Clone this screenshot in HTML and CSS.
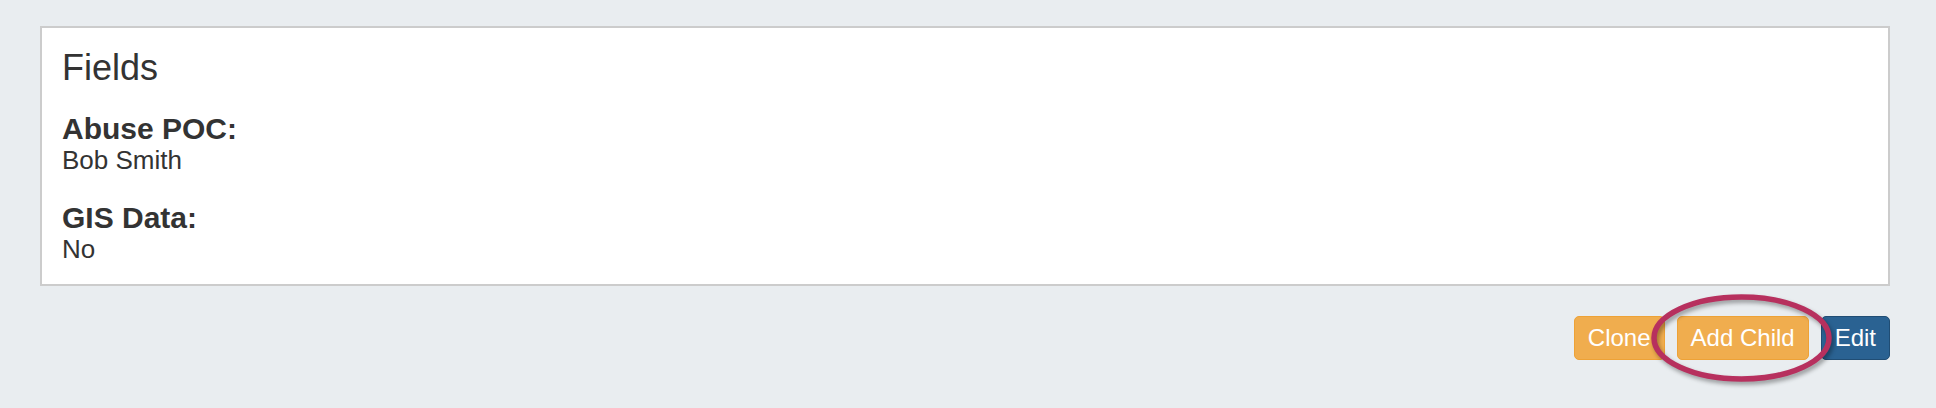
FILE: index.html
```html
<!DOCTYPE html>
<html>
<head>
<meta charset="utf-8">
<link rel="stylesheet" href="styles.css">
</head>
<body>
<div class="page">
  <section class="panel">
    <h3 class="panel-title">Fields</h3>
    <div class="field">
      <div class="field-label">Abuse POC:</div>
      <div class="field-value">Bob Smith</div>
    </div>
    <div class="field">
      <div class="field-label">GIS Data:</div>
      <div class="field-value">No</div>
    </div>
  </section>
  <div class="actions">
    <button class="btn btn-warning">Clone</button>
    <span class="highlight-wrap">
      <button class="btn btn-warning">Add Child</button>
      <svg class="highlight" width="181" height="88" viewBox="0 0 181 88">
        <ellipse cx="90.5" cy="44" rx="87.5" ry="41" fill="none" stroke="#b7305e" stroke-width="5.5"/>
      </svg>
    </span>
    <button class="btn btn-primary">Edit</button>
  </div>
</div>
</body>
</html>
```
FILE: styles.css
```css
html, body {
  margin: 0;
  padding: 0;
  background: #e9edf0;
}
body {
  font-family: "Liberation Sans", Arial, Helvetica, sans-serif;
  color: #333333;
}
.page {
  padding: 26px 46px 0 40px;
  height: 382px;
}
.panel {
  background: #ffffff;
  border: 2px solid #cccccc;
  padding: 20px 20px 18px 20px;
}
.panel-title {
  margin: 0;
  font-size: 36px;
  line-height: 39px;
  font-weight: normal;
}
.field {
  margin-top: 28px;
}
.field + .field {
  margin-top: 27px;
}
.field-label {
  font-size: 30px;
  line-height: 28px;
  font-weight: bold;
}
.field-value {
  font-size: 26px;
  line-height: 34px;
}
.actions {
  margin-top: 30px;
  display: flex;
  justify-content: flex-end;
  align-items: flex-start;
  gap: 12px;
}
.btn {
  font-family: "Liberation Sans", Arial, Helvetica, sans-serif;
  font-size: 24px;
  line-height: 42px;
  height: 44px;
  padding: 0 13px;
  border-radius: 5px;
  color: #ffffff;
  border: 1px solid transparent;
  margin: 0;
}
.btn-warning {
  background: #f0ad4e;
  border-color: #eea236;
}
.btn-primary {
  background: #2a6292;
  border-color: #204d74;
}
.highlight-wrap {
  position: relative;
  display: inline-flex;
}
.highlight {
  position: absolute;
  left: -26px;
  top: -22px;
  overflow: visible;
  filter: drop-shadow(2px 3px 2px rgba(0, 0, 0, 0.35));
  pointer-events: none;
}
```
